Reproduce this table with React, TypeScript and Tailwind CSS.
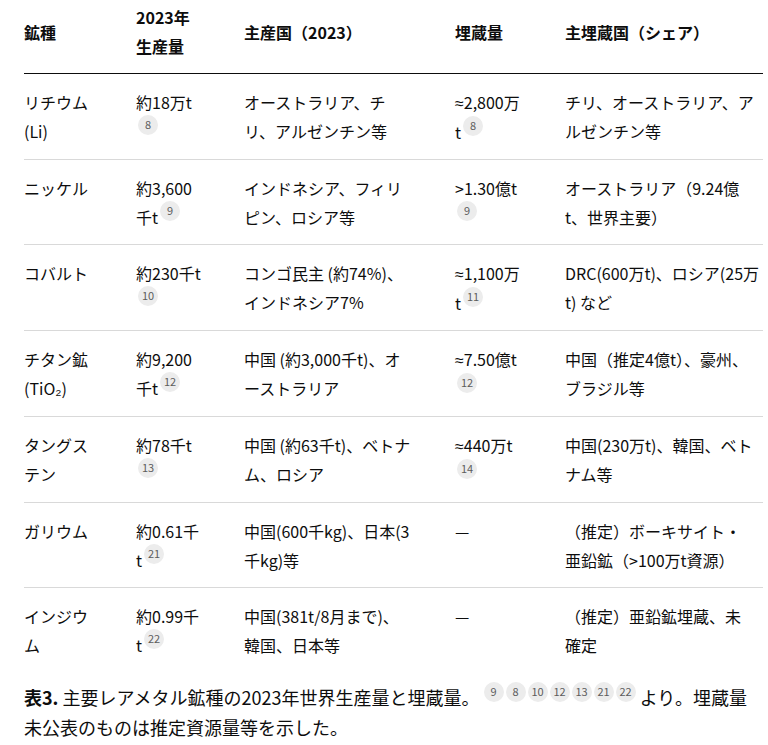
import React from 'react';

type Row = {
  mineral: string;
  production: string;
  productionRef: string;
  producers: string;
  reserves: string;
  reservesRef?: string;
  holders: React.ReactNode;
};

const ROWS: Row[] = [
  {
    mineral: 'リチウム (Li)',
    production: '約18万t',
    productionRef: '8',
    producers: 'オーストラリア、チリ、アルゼンチン等',
    reserves: '≈2,800万t',
    reservesRef: '8',
    holders: 'チリ、オーストラリア、アルゼンチン等',
  },
  {
    mineral: 'ニッケル',
    production: '約3,600千t',
    productionRef: '9',
    producers: 'インドネシア、フィリピン、ロシア等',
    reserves: '>1.30億t',
    reservesRef: '9',
    holders: (
      <>
        オーストラリア（9.24億<span className="whitespace-nowrap">t、世界</span>主要）
      </>
    ),
  },
  {
    mineral: 'コバルト',
    production: '約230千t',
    productionRef: '10',
    producers: 'コンゴ民主 (約74%)、インドネシア7%',
    reserves: '≈1,100万t',
    reservesRef: '11',
    holders: 'DRC(600万t)、ロシア(25万t) など',
  },
  {
    mineral: 'チタン鉱 (TiO₂)',
    production: '約9,200千t',
    productionRef: '12',
    producers: '中国 (約3,000千t)、オーストラリア',
    reserves: '≈7.50億t',
    reservesRef: '12',
    holders: '中国（推定4億t）、豪州、ブラジル等',
  },
  {
    mineral: 'タングステン',
    production: '約78千t',
    productionRef: '13',
    producers: '中国 (約63千t)、ベトナム、ロシア',
    reserves: '≈440万t',
    reservesRef: '14',
    holders: '中国(230万t)、韓国、ベトナム等',
  },
  {
    mineral: 'ガリウム',
    production: '約0.61千t',
    productionRef: '21',
    producers: '中国(600千kg)、日本(3千kg)等',
    reserves: '—',
    holders: (
      <>
        （推定）ボーキサイト・<span className="whitespace-nowrap">亜鉛鉱</span>（&gt;100万t資源）
      </>
    ),
  },
  {
    mineral: 'インジウム',
    production: '約0.99千t',
    productionRef: '22',
    producers: '中国(381t/8月まで)、韓国、日本等',
    reserves: '—',
    holders: (
      <>
        （推定）亜鉛鉱埋蔵、未<span className="whitespace-nowrap">確定</span>
      </>
    ),
  },
];

const CAPTION_REFS = ['9', '8', '10', '12', '13', '21', '22'];

const Cite: React.FC<{ n: string }> = ({ n }) => (
  <span className="relative -top-[9px] -my-1 ml-[2px] inline-flex h-5 w-5 items-center justify-center rounded-full bg-[#ececec] text-[11px] leading-none text-[#5d5d5d]">
    {n}
  </span>
);

// the CJK font draws ≈ full width; the reference has a narrow one
const Amount: React.FC<{ value: string }> = ({ value }) =>
  value.startsWith('≈') ? (
    <>
      <span className="font-['Liberation_Sans',sans-serif]">≈</span>
      {value.slice(1)}
    </>
  ) : (
    <>{value}</>
  );

export default function App() {
  return (
    <div className="ml-6 w-[735px] font-['Noto_Sans_CJK_JP',sans-serif] text-[16px] text-[#0d0d0d]">
      <table className="w-[739px] table-fixed border-collapse text-left leading-[29px]">
        <colgroup>
          <col className="w-[112px]" />
          <col className="w-[108px]" />
          <col className="w-[211px]" />
          <col className="w-[110px]" />
          <col className="w-[198px]" />
        </colgroup>
        <thead>
          <tr className="border-b border-[#0d0d0d]">
            <th className="pr-10 pt-[3px] pb-[12px] font-bold">鉱種</th>
            <th className="pr-[41px] pt-[3px] pb-[12px] font-bold">2023年 生産量</th>
            <th className="pr-[44px] pt-[3px] pb-[12px] font-bold">主産国（2023）</th>
            <th className="pr-[42px] pt-[3px] pb-[12px] font-bold">埋蔵量</th>
            <th className="pt-[3px] pb-[12px] font-bold">主埋蔵国（シェア）</th>
          </tr>
        </thead>
        <tbody>
          {ROWS.map((row, i) => (
            <tr
              key={row.mineral}
              className={`align-top ${i < ROWS.length - 1 ? 'border-b border-[#d9d9d9]' : ''}`}
            >
              <td className="pr-10 pt-[14px] pb-[12px]">{row.mineral}</td>
              <td className="pr-[41px] pt-[14px] pb-[12px]">
                {row.production}
                <Cite n={row.productionRef} />
              </td>
              <td className="pr-[44px] pt-[14px] pb-[12px]">{row.producers}</td>
              <td className="pr-[42px] pt-[14px] pb-[12px]">
                <Amount value={row.reserves} />
                {row.reservesRef && <Cite n={row.reservesRef} />}
              </td>
              <td className="pt-[14px] pb-[12px]">{row.holders}</td>
            </tr>
          ))}
        </tbody>
      </table>

      <p className="mt-[10px] text-[18px] leading-[30px]">
        <b>表3.</b> 主要レアメタル鉱種の2023年世界生産量と埋蔵量。
        <span className="ml-[2px]">
          {CAPTION_REFS.map((n, i) => (
            <Cite key={i} n={n} />
          ))}
        </span>{' '}
        より。埋蔵量未公表のものは推定資源量等を示した。
      </p>
    </div>
  );
}
